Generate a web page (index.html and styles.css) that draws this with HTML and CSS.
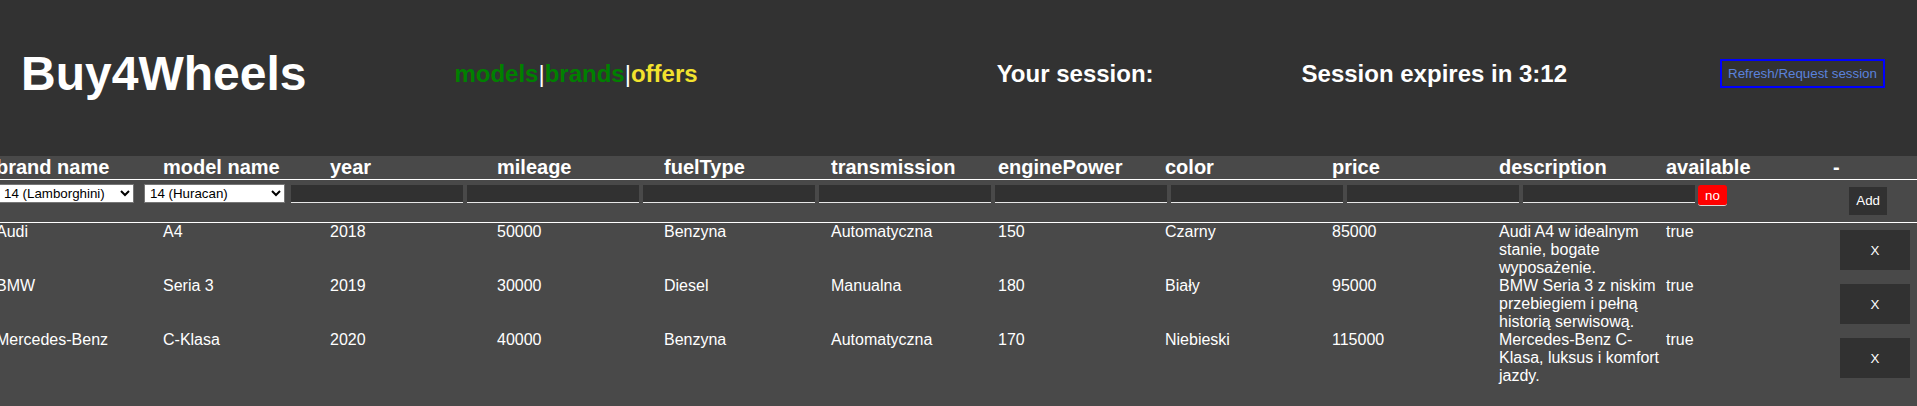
FILE: index.html
```html
<!DOCTYPE html>
<html lang="en">
<head>
<meta charset="utf-8">
<title>Buy4Wheels</title>
<link rel="stylesheet" href="styles.css">
</head>
<body>
<header class="topbar">
  <h1 class="logo">Buy4Wheels</h1>
  <nav class="nav"><a class="nav-link nav-green" href="#">models</a><span class="nav-sep">|</span><a class="nav-link nav-green" href="#">brands</a><span class="nav-sep">|</span><a class="nav-link nav-yellow" href="#">offers</a></nav>
  <div class="session">Your session:</div>
  <div class="expires">Session expires in 3:12</div>
  <button class="refresh" type="button">Refresh/Request session</button>
</header>
<main class="content">
  <table class="offers">
    <colgroup>
      <col class="c"><col class="c"><col class="c"><col class="c"><col class="c"><col class="c"><col class="c"><col class="c"><col class="c"><col class="c"><col class="c"><col class="c-last">
    </colgroup>
    <thead>
      <tr>
        <th>brand name</th><th>model name</th><th>year</th><th>mileage</th><th>fuelType</th><th>transmission</th><th>enginePower</th><th>color</th><th>price</th><th>description</th><th>available</th><th>-</th>
      </tr>
    </thead>
    <tbody>
      <tr class="form-row">
        <td colspan="12">
          <div class="form-fields">
            <select class="sel sel-brand"><option>14 (Lamborghini)</option></select>
            <select class="sel sel-model"><option>14 (Huracan)</option></select>
            <div class="inputs">
              <input class="field" type="text">
              <input class="field" type="text">
              <input class="field" type="text">
              <input class="field" type="text">
              <input class="field" type="text">
              <input class="field" type="text">
              <input class="field" type="text">
              <input class="field" type="text">
            </div>
            <button class="toggle" type="button">no</button>
            <button class="add" type="button">Add</button>
          </div>
        </td>
      </tr>
      <tr class="data-row">
        <td>Audi</td><td>A4</td><td>2018</td><td>50000</td><td>Benzyna</td><td>Automatyczna</td><td>150</td><td>Czarny</td><td>85000</td><td>Audi A4 w idealnym stanie, bogate wyposażenie.</td><td>true</td><td><button class="del" type="button">X</button></td>
      </tr>
      <tr class="data-row">
        <td>BMW</td><td>Seria 3</td><td>2019</td><td>30000</td><td>Diesel</td><td>Manualna</td><td>180</td><td>Biały</td><td>95000</td><td>BMW Seria 3 z niskim przebiegiem i pełną historią serwisową.</td><td>true</td><td><button class="del" type="button">X</button></td>
      </tr>
      <tr class="data-row">
        <td>Mercedes-Benz</td><td>C-Klasa</td><td>2020</td><td>40000</td><td>Benzyna</td><td>Automatyczna</td><td>170</td><td>Niebieski</td><td>115000</td><td>Mercedes-Benz C-Klasa, luksus i komfort jazdy.</td><td>true</td><td><button class="del" type="button">X</button></td>
      </tr>
    </tbody>
  </table>
</main>
</body>
</html>
```

FILE: styles.css
```css
html, body {
  margin: 0;
  padding: 0;
}
body {
  background: #494949;
  color: #ffffff;
  font-family: "Liberation Sans", Arial, sans-serif;
  overflow: hidden;
}

/* ---------- top bar ---------- */
.topbar {
  box-sizing: border-box;
  height: 156px;
  padding-bottom: 9px;
  background: #323232;
  display: flex;
  align-items: center;
}
.logo {
  margin: 0 0 0 21px;
  font-size: 48px;
  font-weight: bold;
  color: #ffffff;
}
.nav {
  margin-left: 148px;
  font-size: 24px;
  font-weight: bold;
}
.nav-link {
  text-decoration: none;
}
.nav-green { color: #008000; }
.nav-yellow { color: #f2e22e; }
.nav-sep { color: #ffffff; font-weight: normal; }
.session {
  margin-left: 299px;
  font-size: 24px;
  font-weight: bold;
}
.expires {
  margin-left: 148px;
  font-size: 24px;
  font-weight: bold;
}
.refresh {
  margin-left: 153px;
  background: transparent;
  border: 2px solid #0000ff;
  color: #5b82dc;
  font-family: "Liberation Sans", Arial, sans-serif;
  font-size: 13.333px;
  line-height: 15px;
  padding: 5px 6px;
}

/* ---------- table ---------- */
.content {
  display: block;
}
.offers {
  border-collapse: collapse;
  border-spacing: 0;
  table-layout: fixed;
  width: calc(100% + 4px);
  margin-left: -4px;
}
.offers col.c { width: 167px; }
.offers th {
  padding: 0;
  text-align: left;
  vertical-align: top;
  font-size: 20px;
  font-weight: bold;
  white-space: nowrap;
  border-bottom: 1px solid #ffffff;
}
.offers td {
  padding: 0;
  vertical-align: top;
  font-size: 16px;
}
.form-row td {
  border-bottom: 1px solid #ffffff;
}
.form-fields {
  height: 42px;
  display: flex;
  align-items: flex-start;
  padding-left: 2px;
}
.sel {
  margin-top: 4px;
  height: 19px;
  box-sizing: border-box;
  background: #ffffff;
  color: #000000;
  border: 1px solid #767676;
  border-radius: 0;
  font-family: "Liberation Sans", Arial, sans-serif;
  font-size: 13.333px;
  padding: 0 0 0 1px;
}
.sel-brand { width: 136px; }
.sel-model { width: 141px; margin-left: 10px; }
.inputs {
  display: flex;
  gap: 4px;
  margin-left: 6px;
  margin-top: 5px;
}
.field {
  box-sizing: border-box;
  width: 172px;
  height: 18px;
  margin: 0;
  padding: 0 2px;
  background: #313131;
  color: #ffffff;
  border: none;
  border-bottom: 1px solid #e6e6e6;
  font-family: "Liberation Sans", Arial, sans-serif;
  font-size: 13.333px;
}
.toggle {
  margin: 5px 0 0 3px;
  box-sizing: border-box;
  height: 21px;
  padding: 0 7px;
  background: #ff0000;
  color: #ffffff;
  border: none;
  border-bottom: 1px solid #d8d8d8;
  border-radius: 3px;
  font-family: "Liberation Sans", Arial, sans-serif;
  font-size: 13.333px;
  line-height: 19px;
}
.add {
  margin: 7px 30px 0 auto;
  box-sizing: border-box;
  height: 28px;
  padding: 0 7px;
  background: #313131;
  color: #ffffff;
  border: none;
  font-family: "Liberation Sans", Arial, sans-serif;
  font-size: 13.333px;
  line-height: 28px;
}
.del {
  display: block;
  box-sizing: border-box;
  width: 70px;
  height: 40px;
  margin: 7px;
  padding: 0;
  background: #313131;
  color: #ffffff;
  border: none;
  font-family: "Liberation Sans", Arial, sans-serif;
  font-size: 13.333px;
}
```
